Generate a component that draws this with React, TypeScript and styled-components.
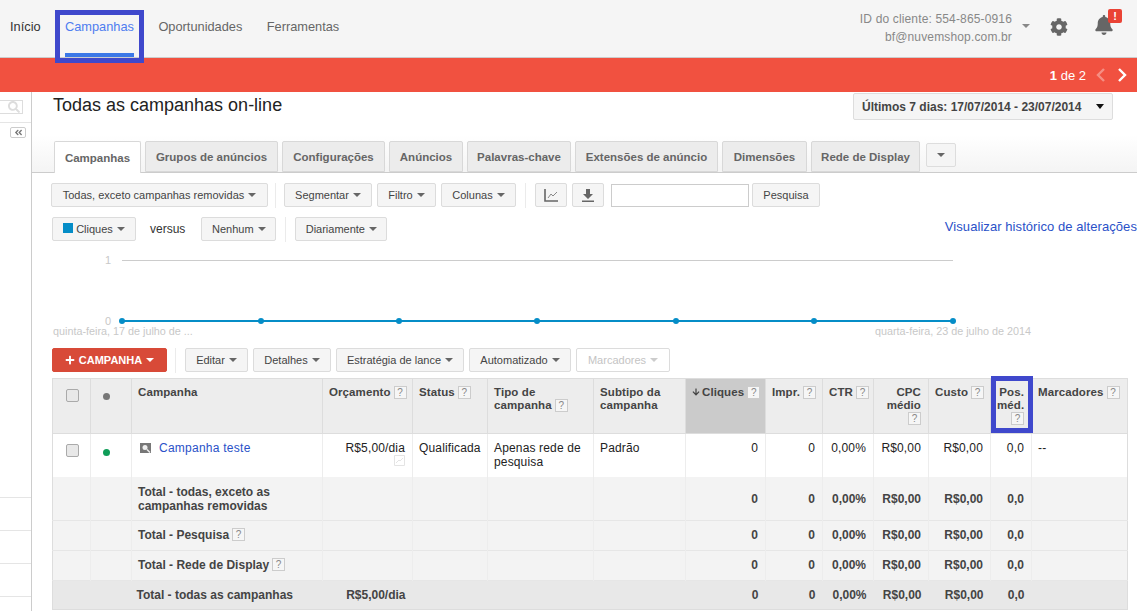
import React from 'react'
import styled, { createGlobalStyle } from 'styled-components'
import { FaCog, FaBell, FaSearch, FaPlus, FaArrowDown, FaAngleDoubleLeft } from 'react-icons/fa'

const GlobalStyle = createGlobalStyle`
    html, body {
        margin: 0;
        padding: 0;
        background: #fff;
        overflow: hidden;
    }
    body {
        font-family: "Liberation Sans", Arial, sans-serif;
        font-size: 12px;
        color: #333;
    }
`

const Page = styled.div`
    width: 1137px;
    height: 611px;
    overflow: hidden;
    display: flex;
    flex-direction: column;
`

const TopBar = styled.header`
    height: 57px;
    flex: none;
    background: #f5f5f5;
    border-bottom: 1px solid #ccc;
    display: flex;
    justify-content: space-between;
`

const Nav = styled.nav`
    display: flex;
    gap: 24.4px;
    padding-left: 10px;
`

const NavLink = styled.a<{ $active?: boolean; $dark?: boolean }>`
    position: relative;
    height: 57px;
    box-sizing: border-box;
    padding-top: 19px;
    font-size: 12.8px;
    line-height: 16px;
    color: ${p => (p.$active ? '#4f7df0' : p.$dark ? '#333' : '#666')};
    border-bottom: 4px solid ${p => (p.$active ? '#3b78e7' : 'transparent')};
`

const Marker = styled.span<{ $top: number; $left: number; $w: number; $h: number }>`
    position: absolute;
    top: ${p => p.$top}px;
    left: ${p => p.$left}px;
    width: ${p => p.$w}px;
    height: ${p => p.$h}px;
    box-sizing: border-box;
    border: 5px solid #3f48cc;
    pointer-events: none;
`

const Account = styled.div`
    display: flex;
    align-items: flex-start;
`

const AccountText = styled.div`
    margin-top: 10px;
    text-align: right;
    font-size: 12px;
    line-height: 18px;
    letter-spacing: 0.15px;
    color: #888;
`

const AccountCaret = styled.span`
    width: 0;
    height: 0;
    margin: 24px 0 0 10px;
    border-left: 4px solid transparent;
    border-right: 4px solid transparent;
    border-top: 4px solid #888;
`

const GearSlot = styled.div`
    margin: 18px 0 0 20px;
    color: #666;
    font-size: 18px;
    line-height: 18px;
`

const BellSlot = styled.div`
    position: relative;
    margin: 15px 0 0 26px;
    width: 43px;
    color: #666;
    font-size: 20px;
    line-height: 20px;
`

const BellBadge = styled.span`
    position: absolute;
    top: -6px;
    left: 14px;
    width: 14px;
    height: 14px;
    border-radius: 2px;
    background: #ea4335;
    color: #fff;
    font-size: 11px;
    font-weight: bold;
    line-height: 14px;
    text-align: center;
`

const AlertBar = styled.div`
    height: 34px;
    flex: none;
    background: #f15140;
    display: flex;
    align-items: center;
    justify-content: flex-end;
    padding-right: 9px;
    color: #fff;
    font-size: 13px;
`

const AlertCount = styled.span`
    margin-right: 9px;
    b { font-weight: bold; }
`

const Chevron = styled.svg<{ $faded?: boolean }>`
    width: 12px;
    height: 14px;
    margin-left: ${p => (p.$faded ? 0 : 9)}px;
    opacity: ${p => (p.$faded ? 0.35 : 1)};
`

const Body = styled.div`
    flex: 1;
    display: flex;
    min-height: 0;
`

const Sidebar = styled.aside`
    width: 31px;
    flex: none;
    box-sizing: content-box;
    border-right: 1px solid #ccc;
    display: flex;
    flex-direction: column;
    position: relative;
`

const SideSearch = styled.div`
    margin-top: 8px;
    width: 23px;
    height: 27px;
    box-sizing: border-box;
    border: 1px solid #ddd;
    border-left: none;
    color: #ddd;
    font-size: 12px;
    display: flex;
    align-items: center;
    justify-content: flex-end;
    padding-right: 2px;
`

const SideRule = styled.div`
    margin-top: 8px;
    border-top: 1px solid #e5e5e5;
`

const CollapseButton = styled.div`
    margin: 4px 0 0 10px;
    width: 16px;
    height: 15px;
    box-sizing: border-box;
    border: 1px solid #ccc;
    border-radius: 2px;
    color: #777;
    font-size: 9px;
    display: flex;
    align-items: center;
    justify-content: center;
`

const SideList = styled.div`
    margin-top: 359px;
`

const SideRow = styled.div`
    height: 32px;
    border-top: 1px solid #e5e5e5;
`

const Main = styled.main`
    flex: 1;
    min-width: 0;
`

const TitleRow = styled.div`
    height: 43px;
    box-sizing: border-box;
    padding: 1px 24px 0 21px;
    display: flex;
    justify-content: space-between;
    align-items: flex-start;
`

const Title = styled.h1`
    margin: 2px 0 0;
    font-size: 18px;
    line-height: 21px;
    font-weight: normal;
    color: #222;
`

const DateButton = styled.div`
    width: 260px;
    height: 27px;
    box-sizing: border-box;
    background: #f5f5f5;
    border: 1px solid #ddd;
    border-radius: 2px;
    padding: 0 8px;
    display: flex;
    align-items: center;
    justify-content: space-between;
    font-weight: bold;
    font-size: 12px;
    color: #444;
`

const DateCaret = styled.span`
    width: 0;
    height: 0;
    border-left: 4.5px solid transparent;
    border-right: 4.5px solid transparent;
    border-top: 5px solid #111;
`

const TabStrip = styled.div`
    height: 38px;
    box-sizing: border-box;
    background: linear-gradient(#fff, #f4f4f4);
    border-bottom: 1px solid #ccc;
    padding-left: 22px;
    display: flex;
    align-items: flex-end;
    gap: 4px;
`

const Tab = styled.div<{ $w: number; $active?: boolean }>`
    width: ${p => p.$w}px;
    height: ${p => (p.$active ? 32 : 31)}px;
    margin-bottom: ${p => (p.$active ? -1 : 0)}px;
    box-sizing: border-box;
    background: ${p => (p.$active ? '#fff' : '#ececec')};
    border: 1px solid #d8d8d8;
    border-bottom: ${p => (p.$active ? 'none' : '1px solid #d8d8d8')};
    border-radius: 2px 2px 0 0;
    display: flex;
    align-items: center;
    justify-content: center;
    font-size: 11.5px;
    font-weight: bold;
    color: #666;
`

const TabMenu = styled.div`
    width: 30px;
    height: 24px;
    margin: 0 0 5px 2px;
    box-sizing: border-box;
    background: #f5f5f5;
    border: 1px solid #ddd;
    border-radius: 2px;
    display: flex;
    align-items: center;
    justify-content: center;
`

const Toolbar = styled.div<{ $top: number; $left: number }>`
    margin-top: ${p => p.$top}px;
    padding-left: ${p => p.$left}px;
    height: 24px;
    display: flex;
    align-items: center;
    gap: 5px;
`

const Button = styled.div<{ $w: number; $off?: boolean }>`
    width: ${p => p.$w}px;
    height: 24px;
    flex: none;
    box-sizing: border-box;
    background: ${p => (p.$off ? '#fff' : '#f5f5f5')};
    border: 1px solid #dcdcdc;
    border-radius: 2px;
    display: flex;
    align-items: center;
    justify-content: center;
    gap: 4px;
    font-size: 11px;
    color: ${p => (p.$off ? '#c4c4c4' : '#444')};
`

const RedButton = styled(Button)`
    background: #d84a38;
    border-color: #d84a38;
    color: #fff;
    font-weight: bold;
    font-size: 11px;
`

const Caret = styled.span<{ $off?: boolean; $white?: boolean }>`
    width: 0;
    height: 0;
    border-left: 4px solid transparent;
    border-right: 4px solid transparent;
    border-top: 4px solid ${p => (p.$white ? '#fff' : p.$off ? '#ccc' : '#666')};
`

const Sep = styled.span<{ $l: number; $r: number }>`
    width: 1px;
    height: 25px;
    flex: none;
    background: #ebebeb;
    margin: 0 ${p => p.$r}px 0 ${p => p.$l}px;
`

const SearchInput = styled.div`
    width: 138px;
    height: 23px;
    margin-left: 2px;
    margin-right: -2px;
    box-sizing: border-box;
    border: 1px solid #ccc;
    background: #fff;
`

const Swatch = styled.span`
    width: 10px;
    height: 10px;
    background: #058dc7;
    margin: -2px -1px 0 0;
`

const Versus = styled.span`
    margin: 0 11px 0 9px;
    font-size: 12px;
    color: #333;
`

const HistoryLink = styled.a`
    margin-left: auto;
    margin-top: -5px;
    font-size: 13px;
    color: #2a51c8;
    white-space: nowrap;
    letter-spacing: 0.07px;
`

const ChartBox = styled.svg`
    display: block;
    width: 1105px;
    height: 104px;
    font-family: "Liberation Sans", Arial, sans-serif;
`

const Table = styled.table`
    margin: 6px 0 0 20px;
    width: 1075px;
    table-layout: fixed;
    border-collapse: collapse;
    border: 1px solid #ddd;
    font-size: 12px;
    line-height: 14px;
`

const HeadRow = styled.tr`
    height: 55px;
    background: #ededed;
    border-bottom: 1px solid #ddd;
`

const Th = styled.th<{ $right?: boolean; $sorted?: boolean; $anchor?: boolean }>`
    position: ${p => (p.$anchor ? 'relative' : 'static')};
    padding: 7px ${p => (p.$sorted ? 8 : 7)}px 0 6px;
    vertical-align: top;
    text-align: ${p => (p.$right ? 'right' : 'left')};
    font-weight: bold;
    font-size: 11.5px;
    line-height: 13px;
    letter-spacing: 0.1px;
    white-space: nowrap;
    color: #444;
    background: ${p => (p.$sorted ? '#cbcbcb' : 'transparent')};
    border-right: 1px solid #ddd;
`

const Row = styled.tr<{ $h: number; $kind: 'body' | 'total' | 'foot' }>`
    height: ${p => p.$h}px;
    background: ${p => (p.$kind === 'body' ? '#fff' : p.$kind === 'total' ? '#f3f3f3' : '#e8e8e8')};
    border-bottom: ${p => (p.$kind === 'total' ? '1px solid #e6e6e6' : 'none')};
`

const Td = styled.td<{ $right?: boolean; $top?: boolean; $bold?: boolean; $open?: boolean; $up?: boolean; $down?: boolean }>`
    padding: ${p => (p.$top ? '7px' : p.$down ? '2px' : '0')} 7px ${p => (p.$up ? '2px' : '0')} 6px;
    vertical-align: ${p => (p.$top ? 'top' : 'middle')};
    text-align: ${p => (p.$right ? 'right' : 'left')};
    font-weight: ${p => (p.$bold ? 'bold' : 'normal')};
    color: ${p => (p.$bold ? '#444' : '#222')};
    border-right: ${p => (p.$open ? 'none' : '1px solid #ededed')};
    letter-spacing: ${p => (p.$bold ? 0 : 0.15)}px;
`

const FootLabel = styled.span`
    margin-left: -1px;
`

const Help = styled.span`
    display: inline-block;
    width: 13px;
    height: 13px;
    margin-left: 3px;
    box-sizing: border-box;
    border: 1px solid #ccc;
    background: #f6f6f6;
    color: #888;
    font-size: 10px;
    font-weight: normal;
    line-height: 11px;
    text-align: center;
    vertical-align: top;
    letter-spacing: 0;
`

const Check = styled.span`
    display: block;
    width: 13px;
    height: 13px;
    margin: 3px 0 0 7px;
    box-sizing: border-box;
    border: 1px solid #aaa;
    border-radius: 2px;
    background: #e8e8e8;
`

const Dot = styled.span<{ $c: string; $top: number }>`
    display: block;
    width: 7px;
    height: 7px;
    margin: ${p => p.$top}px 0 0 6px;
    border-radius: 50%;
    background: ${p => p.$c};
`

const CampaignIcon = styled.svg`
    margin-left: 2px;
    vertical-align: -1px;
`

const CampaignLink = styled.a`
    color: #2a51c8;
    margin-left: 8px;
    letter-spacing: 0.25px;
`

const SortIcon = styled.span`
    color: #444;
    font-size: 8px;
    margin-right: 2px;
`

const TrendIcon = styled.svg`
    display: block;
    margin: 0 0 0 auto;
`

const totals = ['0', '0', '0,00%', 'R$0,00', 'R$0,00', '0,0']

function Chart() {
    const xs = [122, 261, 399, 537, 676, 814, 953]
    return (
        <ChartBox viewBox="32 241 1105 104">
            <text x="111" y="264" textAnchor="end" fontSize="11" fill="#c8c8c8">1</text>
            <line x1="122" y1="260.5" x2="953" y2="260.5" stroke="#ccc" />
            <text x="111" y="325" textAnchor="end" fontSize="11" fill="#c8c8c8">0</text>
            <line x1="122" y1="321" x2="953" y2="321" stroke="#058dc7" strokeWidth="2" />
            {xs.map(x => <circle key={x} cx={x} cy="321" r="3" fill="#058dc7" />)}
            <text x="53" y="335" fontSize="10.8" fill="#c8c8c8">quinta-feira, 17 de julho de ...</text>
            <text x="1031" y="335" textAnchor="end" fontSize="10.8" fill="#c8c8c8">quarta-feira, 23 de julho de 2014</text>
        </ChartBox>
    )
}

function TotalRow({ label, help, h, up, down }: { label: React.ReactNode, help?: boolean, h: number, up?: boolean, down?: boolean }) {
    return (
        <Row $h={h} $kind="total">
            <Td /><Td />
            <Td $bold $up={up} $down={down}>{label}{help && <Help>?</Help>}</Td>
            <Td /><Td /><Td /><Td />
            {totals.map((t, i) => <Td key={i} $right $bold $up={up} $down={down}>{t}</Td>)}
            <Td $open />
        </Row>
    )
}

export default function App() {
    return (
        <Page>
            <GlobalStyle />
            <TopBar>
                <Nav>
                    <NavLink $dark>Início</NavLink>
                    <NavLink $active>
                        Campanhas
                        <Marker $top={10} $left={-10} $w={89} $h={53} />
                    </NavLink>
                    <NavLink>Oportunidades</NavLink>
                    <NavLink>Ferramentas</NavLink>
                </Nav>
                <Account>
                    <AccountText>
                        ID do cliente: 554-865-0916<br />
                        bf@nuvemshop.com.br
                    </AccountText>
                    <AccountCaret />
                    <GearSlot><FaCog /></GearSlot>
                    <BellSlot>
                        <FaBell />
                        <BellBadge>!</BellBadge>
                    </BellSlot>
                </Account>
            </TopBar>
            <AlertBar>
                <AlertCount><b>1</b> de 2</AlertCount>
                <Chevron $faded viewBox="0 0 12 14"><path d="M9 1 3 7l6 6" fill="none" stroke="#fff" strokeWidth="2.4" /></Chevron>
                <Chevron viewBox="0 0 12 14"><path d="m3 1 6 6-6 6" fill="none" stroke="#fff" strokeWidth="2.4" /></Chevron>
            </AlertBar>
            <Body>
                <Sidebar>
                    <SideSearch><FaSearch /></SideSearch>
                    <SideRule />
                    <CollapseButton><FaAngleDoubleLeft /></CollapseButton>
                    <SideList>
                        <SideRow /><SideRow /><SideRow /><SideRow />
                    </SideList>
                </Sidebar>
                <Main>
                    <TitleRow>
                        <Title>Todas as campanhas on-line</Title>
                        <DateButton>
                            Últimos 7 dias: 17/07/2014 - 23/07/2014
                            <DateCaret />
                        </DateButton>
                    </TitleRow>
                    <TabStrip>
                        <Tab $w={87} $active>Campanhas</Tab>
                        <Tab $w={133}>Grupos de anúncios</Tab>
                        <Tab $w={103}>Configurações</Tab>
                        <Tab $w={74}>Anúncios</Tab>
                        <Tab $w={104}>Palavras-chave</Tab>
                        <Tab $w={143}>Extensões de anúncio</Tab>
                        <Tab $w={85}>Dimensões</Tab>
                        <Tab $w={109}>Rede de Display</Tab>
                        <TabMenu><Caret /></TabMenu>
                    </TabStrip>
                    <Toolbar $top={10} $left={19}>
                        <Button $w={217}>Todas, exceto campanhas removidas <Caret /></Button>
                        <Sep $l={2} $r={3} />
                        <Button $w={88}>Segmentar <Caret /></Button>
                        <Button $w={59}>Filtro <Caret /></Button>
                        <Button $w={75}>Colunas <Caret /></Button>
                        <Sep $l={4} $r={4} />
                        <Button $w={32}>
                            <svg width="14" height="13" viewBox="0 0 14 13">
                                <path d="M1 0v12h13" fill="none" stroke="#666" strokeWidth="1.6" />
                                <path d="m4 9 3-4 2 2 4-4" fill="none" stroke="#888" strokeWidth="1" />
                            </svg>
                        </Button>
                        <Button $w={32}>
                            <svg width="12" height="13" viewBox="0 0 12 13">
                                <path d="M4 0h4v5h3L6 10 1 5h3zM0 11.500h12v1.500H0z" fill="#666" />
                            </svg>
                        </Button>
                        <SearchInput />
                        <Button $w={68}>Pesquisa</Button>
                    </Toolbar>
                    <Toolbar $top={10} $left={20}>
                        <Button $w={84}><Swatch /> Cliques <Caret /></Button>
                        <Versus>versus</Versus>
                        <Button $w={75}>Nenhum <Caret /></Button>
                        <Sep $l={4} $r={4} />
                        <Button $w={92}>Diariamente <Caret /></Button>
                        <HistoryLink>Visualizar histórico de alterações</HistoryLink>
                    </Toolbar>
                    <Chart />
                    <Toolbar $top={3} $left={20}>
                        <RedButton $w={115}><FaPlus size={10} /> CAMPANHA <Caret $white /></RedButton>
                        <Sep $l={3} $r={4} />
                        <Button $w={63}>Editar <Caret /></Button>
                        <Button $w={78}>Detalhes <Caret /></Button>
                        <Button $w={128}>Estratégia de lance <Caret /></Button>
                        <Button $w={102}>Automatizado <Caret /></Button>
                        <Button $w={94} $off>Marcadores <Caret $off /></Button>
                    </Toolbar>
                    <Table>
                        <colgroup>
                            {[38, 41, 191, 90, 75, 106, 92, 80, 57, 51, 55, 62, 41, 96].map((w, i) => <col key={i} width={w} />)}
                        </colgroup>
                        <thead>
                            <HeadRow>
                                <Th><Check /></Th>
                                <Th><Dot $c="#777" $top={7} /></Th>
                                <Th>Campanha</Th>
                                <Th>Orçamento<Help>?</Help></Th>
                                <Th>Status<Help>?</Help></Th>
                                <Th>Tipo de<br />campanha<Help>?</Help></Th>
                                <Th>Subtipo da<br />campanha</Th>
                                <Th $sorted $right><SortIcon><FaArrowDown /></SortIcon>Cliques<Help>?</Help></Th>
                                <Th $right>Impr.<Help>?</Help></Th>
                                <Th $right>CTR<Help>?</Help></Th>
                                <Th $right>CPC<br />médio<br /><Help>?</Help></Th>
                                <Th $right>Custo<Help>?</Help></Th>
                                <Th $right $anchor>
                                    Pos.<br />méd.<br /><Help>?</Help>
                                    <Marker $top={-3} $left={0} $w={42} $h={57} />
                                </Th>
                                <Th>Marcadores<Help>?</Help></Th>
                            </HeadRow>
                        </thead>
                        <tbody>
                            <Row $h={43} $kind="body">
                                <Td $top><Check /></Td>
                                <Td $top><Dot $c="#0f9d58" $top={8} /></Td>
                                <Td $top>
                                    <CampaignIcon width="11" height="10" viewBox="0 0 11 10">
                                        <path d="M0 0h11v10H0z" fill="#777" />
                                        <circle cx="5" cy="4.500" r="2.500" fill="#eee" />
                                        <path d="m7 6.500 3 3" stroke="#eee" strokeWidth="1.500" />
                                    </CampaignIcon>
                                    <CampaignLink>Campanha teste</CampaignLink>
                                </Td>
                                <Td $top $right>
                                    R$5,00/dia
                                    <TrendIcon width="11" height="11" viewBox="0 0 11 11">
                                        <path d="M.5.5h10v10H.5z" fill="none" stroke="#e4e4e4" />
                                        <path d="m2 8 3-3 1 1 3-3" fill="none" stroke="#e4e4e4" />
                                    </TrendIcon>
                                </Td>
                                <Td $top>Qualificada</Td>
                                <Td $top>Apenas rede de pesquisa</Td>
                                <Td $top>Padrão</Td>
                                {totals.map((t, i) => <Td key={i} $top $right>{t}</Td>)}
                                <Td $top $open>--</Td>
                            </Row>
                            <TotalRow h={44} down label={<>Total - todas, exceto as<br />campanhas removidas</>} />
                            <TotalRow h={30} up label="Total - Pesquisa" help />
                            <TotalRow h={30} up label="Total - Rede de Display" help />
                            <Row $h={29} $kind="foot">
                                <Td $open /><Td $open />
                                <Td $bold $open><FootLabel>Total - todas as campanhas</FootLabel></Td>
                                <Td $right $bold $open>R$5,00/dia</Td>
                                <Td $open /><Td $open /><Td $open />
                                {totals.map((t, i) => <Td key={i} $right $bold $open>{t}</Td>)}
                                <Td $open />
                            </Row>
                        </tbody>
                    </Table>
                </Main>
            </Body>
        </Page>
    )
}
